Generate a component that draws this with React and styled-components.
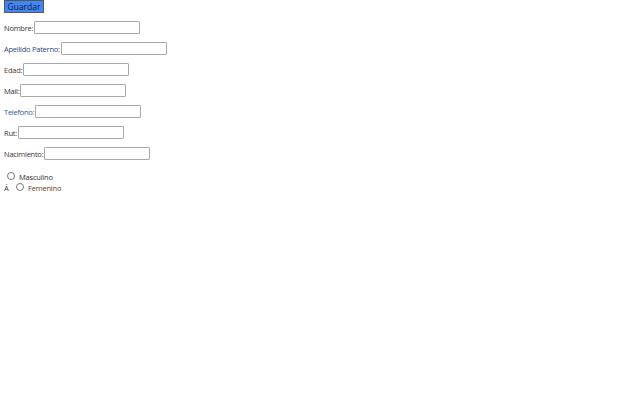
import React from "react";
import styled, { createGlobalStyle } from "styled-components";

const Global = createGlobalStyle`
  html, body { margin: 0; padding: 0; background: #fff; }
  body { font-family: "Segoe UI", "Open Sans", "Liberation Sans", sans-serif; color: #333; }
`;

const Form = styled.form`
  display: flex;
  flex-direction: column;
  align-items: flex-start;
  gap: 8px;
  padding: 0 4px;
`;

const SaveButton = styled.button`
  height: 13px;
  width: 40px;
  padding: 0;
  margin: 0;
  border: 1px solid #555;
  background: #4285f4;
  color: #102040;
  font-family: inherit;
  font-size: 8.5px;
  line-height: 11px;
`;

const Row = styled.label`
  display: flex;
  align-items: center;
  height: 13px;
  font-size: 7.5px;
  letter-spacing: -0.25px;
  color: ${(p) => p.$tint || "#333"};
`;

const Field = styled.input`
  box-sizing: border-box;
  width: 106px;
  height: 13px;
  margin: 0 0 0 1px;
  border: 1px solid #a9a9a9;
  border-radius: 1px;
  padding: 0 2px;
  font-size: 8px;
`;

const RadioGroup = styled.div`
  display: flex;
  flex-direction: column;
  gap: 2px;
  margin-top: 3px;
  font-size: 7.5px;
  letter-spacing: -0.2px;
`;

const RadioLine = styled.div`
  display: flex;
  align-items: center;
  height: 9px;
  padding-left: ${(p) => p.$indent || 0}px;
`;

const Stray = styled.span`
  width: 12px;
  color: #333;
  position: relative;
  top: 1px;
`;

const Radio = styled.input`
  appearance: none;
  box-sizing: border-box;
  width: 8px;
  height: 8px;
  margin: 0 4px 0 0;
  border: 1px solid #777;
  border-radius: 50%;
  background: #fff;
`;

const RadioText = styled.span`
  color: ${(p) => p.$tint || "#333"};
  position: relative;
  top: 1px;
`;

const fields = [
  { label: "Nombre:", tint: "#333" },
  { label: "Apellido Paterno:", tint: "#2a4a7a" },
  { label: "Edad:", tint: "#5a4030" },
  { label: "Mail:", tint: "#333" },
  { label: "Telefono:", tint: "#2a5a9a" },
  { label: "Rut:", tint: "#333" },
  { label: "Nacimiento:", tint: "#4a3030" },
];

export default function App() {
  return (
    <>
      <Global />
      <Form onSubmit={(e) => e.preventDefault()}>
        <SaveButton type="submit">Guardar</SaveButton>
        {fields.map((f) => (
          <Row key={f.label} $tint={f.tint}>
            {f.label}
            <Field type="text" />
          </Row>
        ))}
        <RadioGroup>
          <RadioLine $indent={3}>
            <Radio type="radio" name="sexo" />
            <RadioText>Masculino</RadioText>
          </RadioLine>
          <RadioLine>
            <Stray>Á</Stray>
            <Radio type="radio" name="sexo" />
            <RadioText $tint="#6a3a1a">Femenino</RadioText>
          </RadioLine>
        </RadioGroup>
      </Form>
    </>
  );
}
